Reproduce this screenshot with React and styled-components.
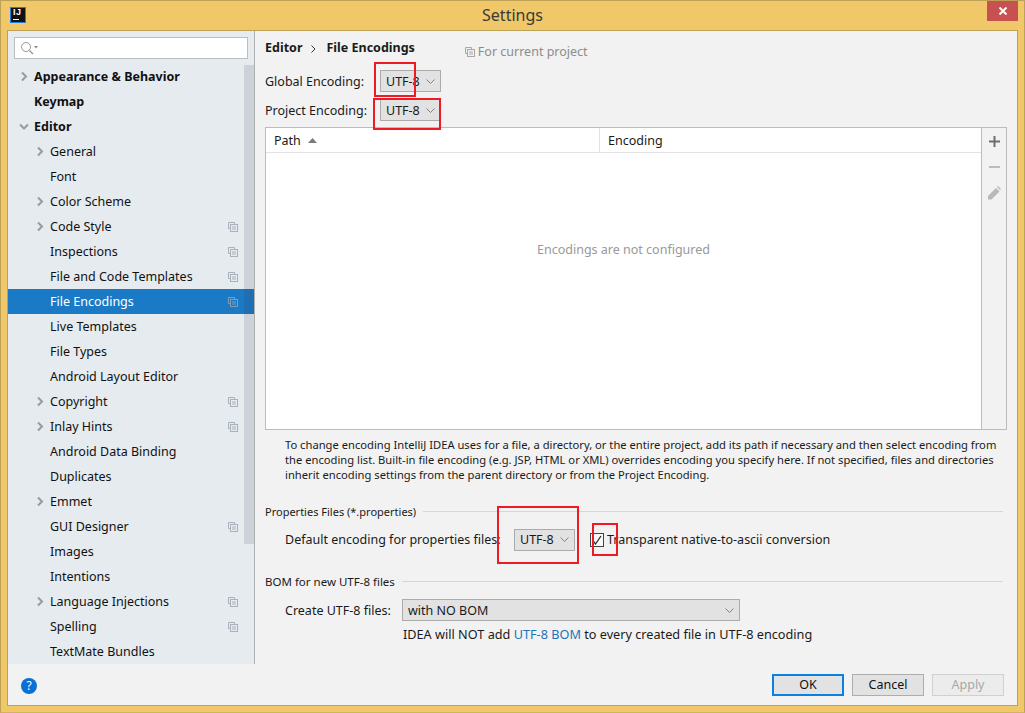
import styled, { createGlobalStyle } from "styled-components";

const GlobalStyle = createGlobalStyle`
  html, body {
    margin: 0;
    padding: 0;
    width: 1025px;
    height: 713px;
    overflow: hidden;
    font-family: "Noto Sans", "Open Sans", sans-serif;
    font-size: 12.5px;
    color: #1a1a1a;
  }
  * { box-sizing: border-box; }
`;

const Window = styled.div`
  position: relative;
  width: 1025px;
  height: 713px;
  background: #f0c869;
  border: 1px solid #bda157;
  border-bottom-color: #d4b35f;
  display: flex;
  flex-direction: column;
`;

const TitleBar = styled.div`
  position: relative;
  height: 29px;
  flex: none;
  display: flex;
  align-items: center;
  justify-content: center;
  font-size: 16px;
  color: #3a3a3a;
  padding-bottom: 1px;
`;

const Logo = styled.div`
  position: absolute;
  left: 9px;
  top: 6px;
  width: 16px;
  height: 16px;
  background: #111;
  border: 1px solid #1f7fe0;
  color: #fff;
  font: bold 9px/9px "Liberation Sans", sans-serif;
  letter-spacing: 0.5px;
  padding: 0 0 0 2px;
  &::after {
    content: "";
    position: absolute;
    left: 2px;
    bottom: 2px;
    width: 6px;
    height: 1px;
    background: #fff;
  }
`;

const CloseButton = styled.div`
  position: absolute;
  right: 6px;
  top: 0;
  width: 31px;
  height: 20px;
  background: #c75050;
  display: flex;
  align-items: center;
  justify-content: center;
`;

const Frame = styled.div`
  flex: none;
  margin-left: 6px;
  width: 1011px;
  height: 676px;
  border: 1px solid #bda157;
  background: #f2f2f2;
  display: flex;
  flex-direction: column;
`;

const Body = styled.div`
  display: flex;
  height: 633px;
  flex: none;
`;

const Sidebar = styled.div`
  position: relative;
  width: 247px;
  flex: none;
  background: #e6ebf0;
  border-right: 1px solid #b0b0b0;
  padding-top: 6px;
`;

const SearchBox = styled.div`
  margin: 0 6px 5px;
  height: 22px;
  background: #fff;
  border: 1px solid #bdbdbd;
  display: flex;
  align-items: center;
  padding-left: 5px;
`;

const Row = styled.div`
  position: relative;
  height: 25px;
  display: flex;
  align-items: center;
  padding-left: ${(p) => (p.$top ? 26 : 42)}px;
  padding-bottom: 1px;
  font-weight: ${(p) => (p.$top ? 700 : 400)};
  background: ${(p) => (p.$active ? "#1b7ac5" : "transparent")};
  color: ${(p) => (p.$active ? "#fff" : "#111")};
  white-space: nowrap;
`;

const Arrow = styled.svg`
  position: absolute;
  left: ${(p) => (p.$top ? 11 : 27)}px;
  top: 7px;
`;

const CopyMark = styled.span`
  position: absolute;
  left: 220px;
  top: 8px;
  display: flex;
`;

const Scrollbar = styled.div`
  position: absolute;
  right: 0;
  top: 34px;
  width: 10px;
  height: 479px;
  background: rgba(60, 60, 70, 0.14);
`;

const Main = styled.div`
  flex: 1;
  padding: 6px 10px 0;
  min-width: 0;
`;

const Crumbs = styled.div`
  height: 33px;
  display: flex;
  align-items: flex-start;
  font-weight: 700;
  padding-top: 2px;
  line-height: 18px;
`;

const CrumbSep = styled.svg`
  margin: 6px 10px 0 9px;
`;

const ProjectNote = styled.span`
  display: flex;
  align-items: center;
  gap: 3px;
  margin-left: 50px;
  margin-top: 4px;
  font-weight: 400;
  color: #8c8c8c;
`;

const FieldRow = styled.div`
  display: flex;
  align-items: center;
  height: 22px;
  margin-top: ${(p) => p.$gap || 0}px;
  padding-left: ${(p) => p.$indent || 0}px;
`;

const Label = styled.span`
  width: ${(p) => p.$width}px;
  flex: none;
  white-space: nowrap;
  padding-bottom: ${(p) => (p.$lift ? 2 : 0)}px;
`;

const CheckLabel = styled.span`
  white-space: nowrap;
  padding-bottom: 2px;
`;

const Combo = styled.div`
  width: ${(p) => p.$width || 61}px;
  height: 22px;
  flex: none;
  background: #e2e2e2;
  border: 1px solid #ababab;
  display: flex;
  align-items: center;
  justify-content: space-between;
  padding: 0 5px ${(p) => (p.$lift ? 2 : 0)}px 5px;
`;

const TablePanel = styled.div`
  margin-top: 6px;
  height: 303px;
  display: flex;
  border: 1px solid #bcbcbc;
`;

const TableArea = styled.div`
  flex: 1;
  background: #fff;
  display: flex;
  flex-direction: column;
`;

const TableHead = styled.div`
  height: 25px;
  flex: none;
  display: flex;
  border-bottom: 1px solid #e2e2e2;
`;

const HeadCell = styled.div`
  display: flex;
  align-items: center;
  gap: 7px;
  padding-left: 8px;
  width: ${(p) => (p.$width ? `${p.$width}px` : "auto")};
  flex: ${(p) => (p.$width ? "none" : 1)};
  border-right: ${(p) => (p.$width ? "1px solid #e2e2e2" : "none")};
`;

const EmptyText = styled.div`
  flex: 1;
  text-align: center;
  padding-top: 88px;
  color: #999;
`;

const TableTools = styled.div`
  width: 25px;
  flex: none;
  border-left: 1px solid #bcbcbc;
  display: flex;
  flex-direction: column;
  align-items: center;
  padding-top: 8px;
  gap: 12px;
`;

const HelpText = styled.p`
  margin: 7px 0 0;
  padding-left: 20px;
  font-size: 11.2px;
  line-height: 15px;
  color: #1a1a1a;
  white-space: nowrap;
`;

const SectionTitle = styled.div`
  height: 16px;
  margin-top: ${(p) => p.$gap}px;
  display: flex;
  align-items: center;
  gap: 7px;
  font-size: ${(p) => p.$size}px;
  margin-right: 4px;
  &::after {
    content: "";
    flex: 1;
    height: 1px;
    background: #d6d6d6;
  }
`;

const CheckBox = styled.span`
  width: 14px;
  height: 14px;
  flex: none;
  margin-left: 15px;
  margin-right: 3px;
  background: #f8f8f8;
  border: 1px solid #444;
  display: flex;
  align-items: center;
  justify-content: center;
`;

const BomNote = styled.div`
  margin-top: 6px;
  padding-left: 138px;
  line-height: 15px;
  font-size: 12.7px;
  white-space: nowrap;
`;

const BlueLink = styled.span`
  color: #1f73b8;
`;

const Footer = styled.div`
  flex: 1;
  display: flex;
  align-items: flex-start;
  justify-content: flex-end;
  gap: 8px;
  padding: 10px 13px 0;
  position: relative;
`;

const HelpButton = styled.div`
  margin-right: auto;
  margin-top: 4px;
  width: 16px;
  height: 16px;
  border-radius: 50%;
  background: #0b70d6;
  color: #fff;
  font-size: 12px;
  line-height: 16px;
  text-align: center;
`;

const Button = styled.div`
  width: 72px;
  height: 22px;
  padding-bottom: 1px;
  background: ${(p) => (p.$disabled ? "#ececec" : "#e2e2e2")};
  border: ${(p) =>
    p.$primary ? "2px solid #0a80e0" : p.$disabled ? "1px solid #d0d0d0" : "1px solid #adadad"};
  color: ${(p) => (p.$disabled ? "#a8a8a8" : "#111")};
  display: flex;
  align-items: center;
  justify-content: center;
`;

const Annotation = styled.div`
  position: absolute;
  left: ${(p) => p.$x}px;
  top: ${(p) => p.$y}px;
  width: ${(p) => p.$w}px;
  height: ${(p) => p.$h}px;
  border: 2px solid #ed1c24;
  pointer-events: none;
`;

const treeRows = [
  { label: "Appearance & Behavior", top: true, arrow: "right" },
  { label: "Keymap", top: true },
  { label: "Editor", top: true, arrow: "down" },
  { label: "General", arrow: "right" },
  { label: "Font" },
  { label: "Color Scheme", arrow: "right" },
  { label: "Code Style", arrow: "right", copy: true },
  { label: "Inspections", copy: true },
  { label: "File and Code Templates", copy: true },
  { label: "File Encodings", copy: true, active: true },
  { label: "Live Templates" },
  { label: "File Types" },
  { label: "Android Layout Editor" },
  { label: "Copyright", arrow: "right", copy: true },
  { label: "Inlay Hints", arrow: "right", copy: true },
  { label: "Android Data Binding" },
  { label: "Duplicates" },
  { label: "Emmet", arrow: "right" },
  { label: "GUI Designer", copy: true },
  { label: "Images" },
  { label: "Intentions" },
  { label: "Language Injections", arrow: "right", copy: true },
  { label: "Spelling", copy: true },
  { label: "TextMate Bundles" },
];

const CopyIcon = ({ color = "#a9b2ba" }) => (
  <svg width="10" height="10" viewBox="0 0 10 10" fill="none" stroke={color} strokeWidth="1">
    <path d="M6.5 2.5v-2h-6v6h2" />
    <rect x="2.5" y="2.5" width="7" height="7" />
    <path d="M4 5h4M4 7h4" />
  </svg>
);

const TreeArrow = ({ dir, top }) => (
  <Arrow $top={top} width="10" height="11" viewBox="0 0 10 11" fill="none" stroke="#9a9a9a" strokeWidth="2">
    {dir === "right" ? <path d="M3 1.5 7 5.5 3 9.5" /> : <path d="M1 3.5 5 7.5 9 3.5" />}
  </Arrow>
);

const ComboCaret = () => (
  <svg width="9" height="5" viewBox="0 0 9 5" fill="none" stroke="#808080" strokeWidth="1">
    <path d="M.5.5l4 4 4-4" />
  </svg>
);

const App = () => (
  <>
    <GlobalStyle />
    <Window>
      <TitleBar>
        <Logo>IJ</Logo>
        Settings
        <CloseButton>
          <svg width="10" height="8" viewBox="0 0 10 8" stroke="#fff" strokeWidth="2">
            <path d="M1.5 0.5 8.5 7.5M8.5 0.5 1.5 7.5" />
          </svg>
        </CloseButton>
      </TitleBar>
      <Frame>
        <Body>
          <Sidebar>
            <SearchBox>
              <svg width="18" height="14" viewBox="0 0 18 14" fill="none">
                <circle cx="6" cy="6" r="4.5" stroke="#9a9a9a" />
                <path d="M9.5 9.5 13 13" stroke="#9a9a9a" strokeWidth="1.4" />
                <path d="M14 5h4l-2 2.5z" fill="#8a8a8a" />
              </svg>
            </SearchBox>
            {treeRows.map((row) => (
              <Row key={row.label} $top={row.top} $active={row.active}>
                {row.arrow && <TreeArrow dir={row.arrow} top={row.top} />}
                {row.label}
                {row.copy && (
                  <CopyMark>
                    <CopyIcon color={row.active ? "#7f9db5" : "#a9b2ba"} />
                  </CopyMark>
                )}
              </Row>
            ))}
            <Scrollbar />
          </Sidebar>
          <Main>
            <Crumbs>
              Editor
              <CrumbSep width="5" height="8" viewBox="0 0 5 8" fill="none" stroke="#333">
                <path d="M.5.5 4 4 .5 7.5" />
              </CrumbSep>
              File Encodings
              <ProjectNote>
                <CopyIcon color="#a8a8a8" />
                For current project
              </ProjectNote>
            </Crumbs>
            <FieldRow>
              <Label $width={115}>Global Encoding:</Label>
              <Combo>
                UTF-8
                <ComboCaret />
              </Combo>
            </FieldRow>
            <FieldRow $gap={7}>
              <Label $width={115}>Project Encoding:</Label>
              <Combo>
                UTF-8
                <ComboCaret />
              </Combo>
            </FieldRow>
            <TablePanel>
              <TableArea>
                <TableHead>
                  <HeadCell $width={334}>
                    Path
                    <svg width="9" height="5" viewBox="0 0 9 5" fill="#7a7a7a">
                      <path d="M4.5 0 9 5H0z" />
                    </svg>
                  </HeadCell>
                  <HeadCell>Encoding</HeadCell>
                </TableHead>
                <EmptyText>Encodings are not configured</EmptyText>
              </TableArea>
              <TableTools>
                <svg width="11" height="11" viewBox="0 0 11 11" fill="#6e6e6e">
                  <path d="M4.5 0h2v4.5H11v2H6.5V11h-2V6.5H0v-2h4.5z" />
                </svg>
                <svg width="11" height="15" viewBox="0 0 11 15" fill="#bcbcbc">
                  <path d="M0 7h11v2H0z" />
                </svg>
                <svg width="14" height="14" viewBox="0 0 14 14" fill="#b8b8b8">
                  <path d="M1 13.5v-3.5L9 2l3.5 3.5-8 8zM10 1l1-1 3 3-1 1z" />
                </svg>
              </TableTools>
            </TablePanel>
            <HelpText>
              To change encoding IntelliJ IDEA uses for a file, a directory, or the entire project, add its path if necessary and then select encoding from
              <br />
              the encoding list. Built-in file encoding (e.g. JSP, HTML or XML) overrides encoding you specify here. If not specified, files and directories
              <br />
              inherit encoding settings from the parent directory or from the Project Encoding.
            </HelpText>
            <SectionTitle $gap={21} $size={11}>Properties Files (*.properties)</SectionTitle>
            <FieldRow $gap={10} $indent={20}>
              <Label $width={229} $lift>Default encoding for properties files:</Label>
              <Combo $lift>
                UTF-8
                <ComboCaret />
              </Combo>
              <CheckBox>
                <svg width="10" height="10" viewBox="0 0 10 10" fill="none" stroke="#222" strokeWidth="1.2">
                  <path d="M1 5.5 3.5 9 9 1" />
                </svg>
              </CheckBox>
              <CheckLabel>Transparent native-to-ascii conversion</CheckLabel>
            </FieldRow>
            <SectionTitle $gap={22} $size={11.5}>BOM for new UTF-8 files</SectionTitle>
            <FieldRow $gap={10} $indent={20}>
              <Label $width={117}>Create UTF-8 files:</Label>
              <Combo $width={338}>
                with NO BOM
                <ComboCaret />
              </Combo>
            </FieldRow>
            <BomNote>
              IDEA will NOT add <BlueLink>UTF-8 BOM</BlueLink> to every created file in UTF-8 encoding
            </BomNote>
          </Main>
        </Body>
        <Footer>
          <HelpButton>?</HelpButton>
          <Button $primary>OK</Button>
          <Button>Cancel</Button>
          <Button $disabled>Apply</Button>
        </Footer>
      </Frame>
      <Annotation $x={373} $y={61} $w={42} $h={35} />
      <Annotation $x={372} $y={97} $w={68} $h={32} />
      <Annotation $x={496} $y={505} $w={82} $h={58} />
      <Annotation $x={591} $y={522} $w={26} $h={33} />
    </Window>
  </>
);

export default App;
